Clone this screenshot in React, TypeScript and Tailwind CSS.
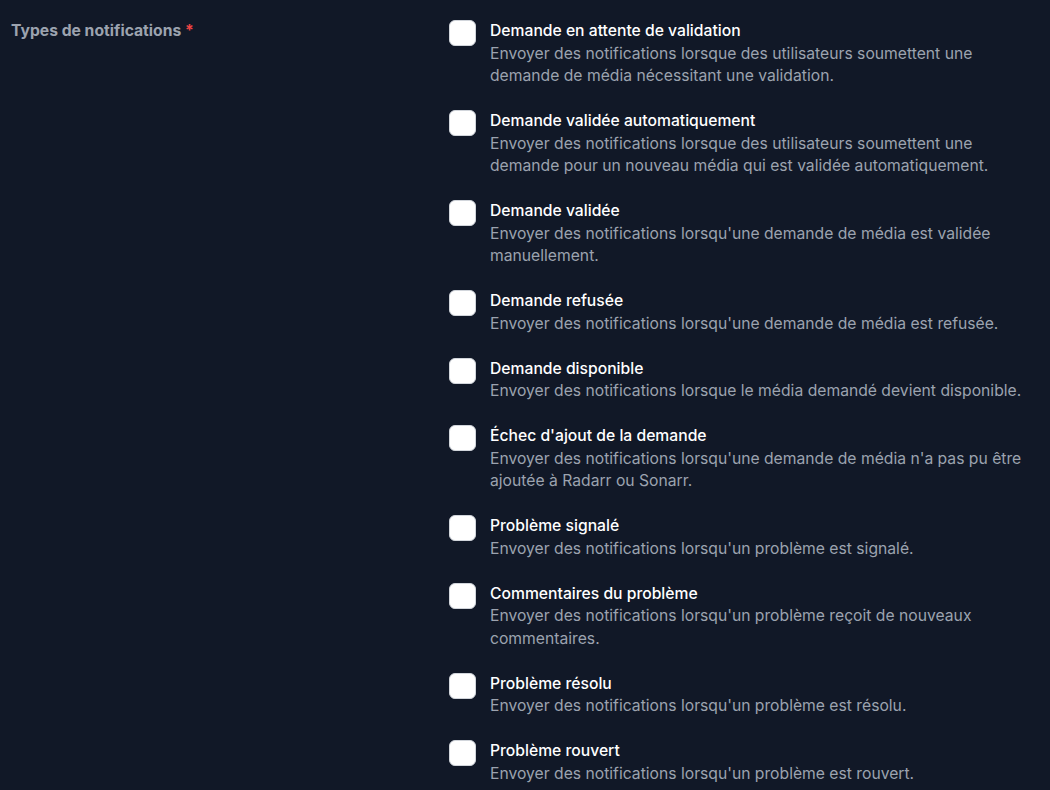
import React from "react";

const types = [
  {
    title: "Demande en attente de validation",
    desc: "Envoyer des notifications lorsque des utilisateurs soumettent une demande de média nécessitant une validation.",
  },
  {
    title: "Demande validée automatiquement",
    desc: "Envoyer des notifications lorsque des utilisateurs soumettent une demande pour un nouveau média qui est validée automatiquement.",
  },
  {
    title: "Demande validée",
    desc: "Envoyer des notifications lorsqu'une demande de média est validée manuellement.",
  },
  {
    title: "Demande refusée",
    desc: "Envoyer des notifications lorsqu'une demande de média est refusée.",
  },
  {
    title: "Demande disponible",
    desc: "Envoyer des notifications lorsque le média demandé devient disponible.",
  },
  {
    title: "Échec d'ajout de la demande",
    desc: "Envoyer des notifications lorsqu'une demande de média n'a pas pu être ajoutée à Radarr ou Sonarr.",
  },
  {
    title: "Problème signalé",
    desc: "Envoyer des notifications lorsqu'un problème est signalé.",
  },
  {
    title: "Commentaires du problème",
    desc: "Envoyer des notifications lorsqu'un problème reçoit de nouveaux commentaires.",
  },
  {
    title: "Problème résolu",
    desc: "Envoyer des notifications lorsqu'un problème est résolu.",
  },
  {
    title: "Problème rouvert",
    desc: "Envoyer des notifications lorsqu'un problème est rouvert.",
  },
];

export default function App() {
  return (
    <div
      className="min-h-screen w-full bg-[#111827] text-[15.7px] leading-[22.5px]"
      style={{ fontFamily: "Inter, 'Noto Sans', sans-serif" }}
    >
      <div className="flex pt-[20px]">
        <div className="w-[449px] shrink-0 pl-[11px] font-bold text-[#9ca3af]">
          Types de notifications <span className="text-[#ef4444]">*</span>
        </div>
        <div className="flex flex-col gap-[22.5px]">
          {types.map((t) => (
            <div key={t.title} className="flex items-start">
              <div className="h-[26px] w-[27px] shrink-0 rounded-[6px] border border-[#d1d5db] bg-white" />
              <div className="ml-[14px] w-[540px]">
                <div className="font-medium text-white">{t.title}</div>
                <p className="text-[#9ca3af]">{t.desc}</p>
              </div>
            </div>
          ))}
        </div>
      </div>
    </div>
  );
}
